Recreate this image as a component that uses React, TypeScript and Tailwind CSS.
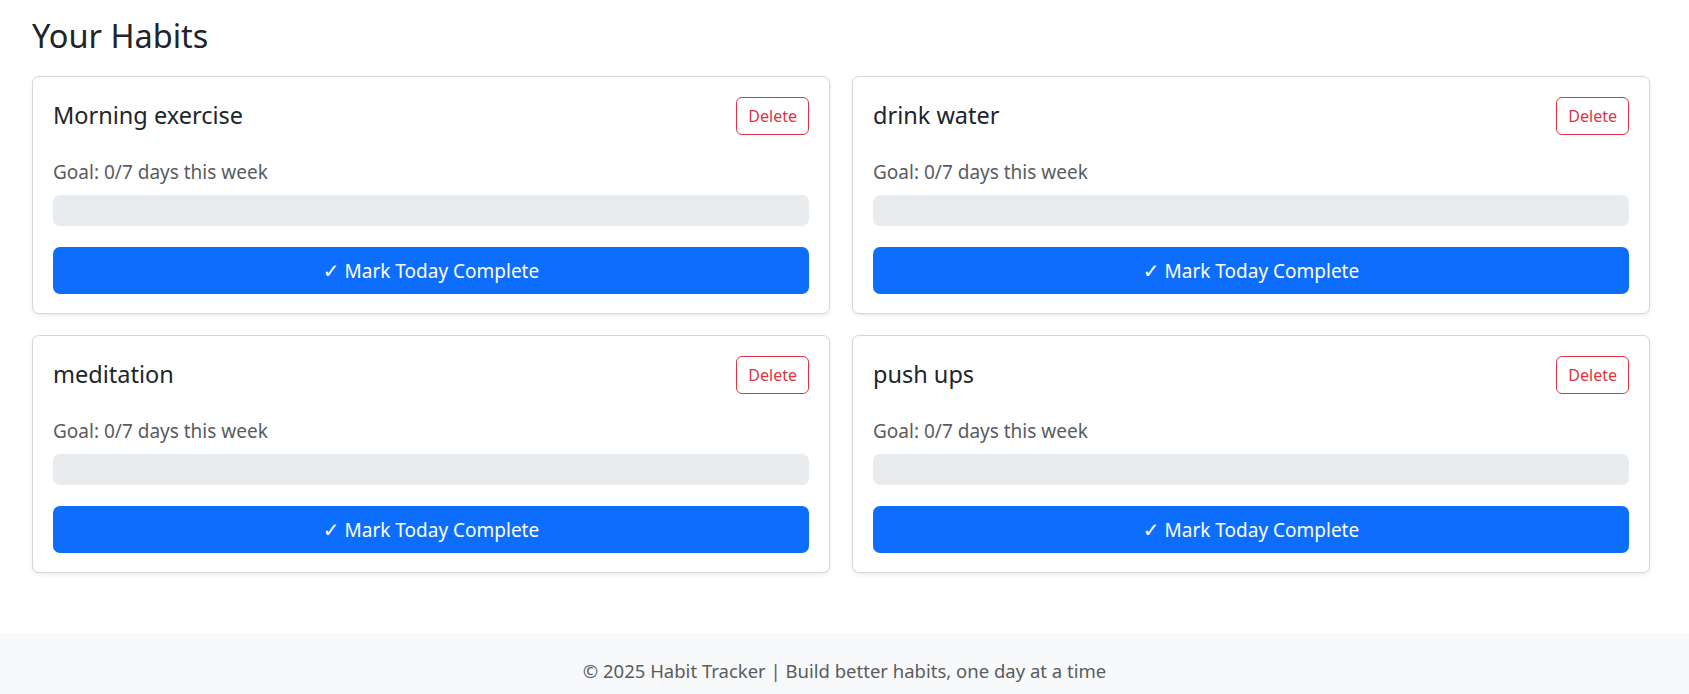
import { useState } from 'react';

type Habit = {
  id: number;
  name: string;
  done: number;
  goal: number;
};

const initialHabits: Habit[] = [
  { id: 1, name: 'Morning exercise', done: 0, goal: 7 },
  { id: 2, name: 'drink water', done: 0, goal: 7 },
  { id: 3, name: 'meditation', done: 0, goal: 7 },
  { id: 4, name: 'push ups', done: 0, goal: 7 },
];

const HabitCard = ({ habit, onDelete, onComplete }: { habit: Habit; onDelete: () => void; onComplete: () => void }) => {
  const pct = Math.min(100, (habit.done / habit.goal) * 100);

  return (
    <div className="bg-white border border-[#d4d6d9] rounded-[7px] shadow-[0_2px_4px_rgba(0,0,0,0.075)] px-5 pt-5 pb-[19px]">
      <div className="flex justify-between items-start h-[38px]">
        <h4 className="text-[23.5px] leading-[1.2] mt-1 text-[#212529]">{habit.name}</h4>
        <button
          onClick={onDelete}
          className="h-[38px] px-[11px] border border-[#dc3545] text-[#dc3545] text-[16px] rounded-[6px] hover:bg-[#dc3545] hover:text-white"
        >
          Delete
        </button>
      </div>
      <p className="mt-[24px] text-[19px] leading-[27px] text-[#595c5f]">
        Goal: {habit.done}/{habit.goal} days this week
      </p>
      <div className="mt-[9px] h-[31px] bg-[#e9ecef] rounded-[7px] overflow-hidden">
        <div className="h-full bg-[#198754]" style={{ width: `${pct}%` }} />
      </div>
      <button
        onClick={onComplete}
        className="mt-[21px] w-full h-[47px] bg-[#0d6efd] text-white text-[19px] rounded-[7px] hover:bg-[#0b5ed7]"
      >
        <span className="font-['DejaVu_Sans',sans-serif] text-[20px]">✓</span> Mark Today Complete
      </button>
    </div>
  );
};

const App = () => {
  const [habits, setHabits] = useState(initialHabits);

  return (
    <div className="min-h-screen bg-white font-['Noto_Sans',sans-serif] text-[#212529]">
      <main className="pl-8 pr-[39px] pt-[16px] pb-[60px]">
        <h2 className="text-[32.5px] leading-[1.2] mb-[21px]">Your Habits</h2>
        <div className="grid grid-cols-2 gap-x-[22px] gap-y-[21px]">
          {habits.map((h) => (
            <HabitCard
              key={h.id}
              habit={h}
              onDelete={() => setHabits(habits.filter((x) => x.id !== h.id))}
              onComplete={() =>
                setHabits(habits.map((x) => (x.id === h.id ? { ...x, done: Math.min(x.goal, x.done + 1) } : x)))
              }
            />
          ))}
        </div>
      </main>
      <footer className="bg-[#f8f9fa] py-6 text-center text-[18.5px] leading-[27px] text-[#595c5f]">
        © 2025 Habit Tracker | Build better habits, one day at a time
      </footer>
    </div>
  );
};

export default App;
